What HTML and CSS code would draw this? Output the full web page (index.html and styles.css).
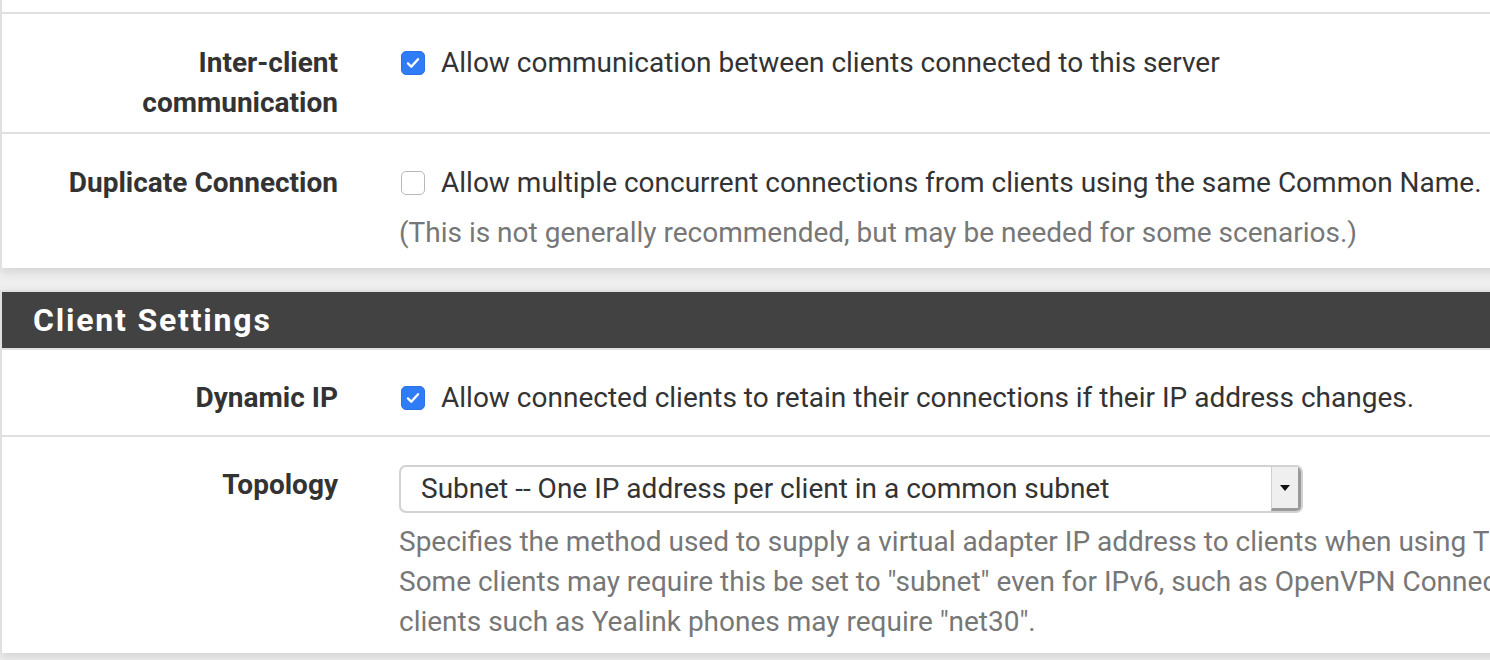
FILE: index.html
```html
<!DOCTYPE html>
<html lang="en">
<head>
  <meta charset="UTF-8" />
  <title>OpenVPN Server Settings</title>
  <link rel="stylesheet" href="styles.css">
</head>
<body>
  <section class="panel panel-first">
    <div class="form-row row-stub"></div>

    <div class="form-row row-intercl">
      <div class="row-label">Inter-client<br>communication</div>
      <div class="row-field">
        <label class="check-line">
          <span class="checkbox checked">
            <svg viewBox="0 0 24 24" width="24" height="24"><path d="M6.5 12.5l3.6 3.6 7.4-8.2" fill="none" stroke="#fff" stroke-width="2.6" stroke-linecap="round" stroke-linejoin="round"/></svg>
          </span>
          Allow communication between clients connected to this server
        </label>
      </div>
    </div>

    <div class="form-row row-dup">
      <div class="row-label">Duplicate Connection</div>
      <div class="row-field">
        <label class="check-line">
          <span class="checkbox"></span>
          Allow multiple concurrent connections from clients using the same Common Name.
        </label>
        <div class="help-text">(This is not generally recommended, but may be needed for some scenarios.)</div>
      </div>
    </div>
  </section>

  <section class="panel">
    <h2 class="panel-heading">Client Settings</h2>

    <div class="form-row row-dynip">
      <div class="row-label">Dynamic IP</div>
      <div class="row-field">
        <label class="check-line">
          <span class="checkbox checked">
            <svg viewBox="0 0 24 24" width="24" height="24"><path d="M6.5 12.5l3.6 3.6 7.4-8.2" fill="none" stroke="#fff" stroke-width="2.6" stroke-linecap="round" stroke-linejoin="round"/></svg>
          </span>
          Allow connected clients to retain their connections if their IP address changes.
        </label>
      </div>
    </div>

    <div class="form-row row-topology">
      <div class="row-label">Topology</div>
      <div class="row-field">
        <div class="select-box">
          <span class="select-value">Subnet -- One IP address per client in a common subnet</span>
          <span class="select-arrow">
            <svg viewBox="0 0 10 6" width="10" height="6"><path d="M0 0h10L5 6z" fill="#111"/></svg>
          </span>
        </div>
        <div class="help-text help-block">
          Specifies the method used to supply a virtual adapter IP address to clients when using TUN mode on IPv4.<br>
          Some clients may require this be set to "subnet" even for IPv6, such as OpenVPN Connect (iOS/Android). Older versions of OpenVPN (before 2.0.9) or<br>
          clients such as Yealink phones may require "net30".
        </div>
      </div>
    </div>
  </section>
</body>
</html>
```

FILE: styles.css
```css
* {
  margin: 0;
  padding: 0;
  box-sizing: border-box;
}

body {
  font-family: 'Roboto', 'Liberation Sans', sans-serif;
  background-color: #efefef;
  color: #333;
  width: 1490px;
  height: 660px;
  overflow: hidden;
}

.panel {
  width: 1700px;
  background-color: #fff;
  border-left: 2px solid #e0e0e0;
  box-shadow: 0 4px 10px rgba(0,0,0,0.12);
}

.panel-first {
  margin-bottom: 22px;
}

.panel-heading {
  background-color: #424242;
  color: #fff;
  font-size: 32px;
  font-weight: 700;
  letter-spacing: 1.8px;
  height: 58px;
  line-height: 56px;
  padding-left: 31px;
  border-top: 2px solid #e0e0e0;
}

.form-row {
  display: grid;
  grid-template-columns: 336px 1fr;
  column-gap: 61px;
  border-bottom: 2px solid #e0e0e0;
  font-size: 28px;
  line-height: 40px;
}

.form-row:last-child {
  border-bottom: none;
}

.panel-heading + .form-row {
  border-top: 2px solid #e0e0e0;
}

.row-stub {
  height: 14px;
}

.row-intercl {
  padding: 29px 0 9px;
}

.row-dup {
  padding: 29px 0 15px;
}

.row-dynip {
  padding: 28px 0 17px;
}

.row-topology {
  padding: 28px 0 11px;
}

.row-label {
  text-align: right;
  font-weight: 700;
  color: #333;
}

.row-field {
  white-space: nowrap;
  color: #333;
}

.check-line {
  display: flex;
  align-items: center;
  gap: 16px;
  padding-left: 2px;
}

.checkbox {
  width: 24px;
  height: 24px;
  flex: none;
  border-radius: 5px;
  border: 1.5px solid #b8b8b8;
  background-color: #fff;
  display: flex;
  align-items: center;
  justify-content: center;
}

.checkbox.checked {
  background-color: #2f7cf6;
  border-color: #2a72e8;
}

.checkbox svg {
  display: block;
}

.help-text {
  color: #777;
  margin-top: 10px;
}

.select-box {
  width: 904px;
  height: 48px;
  border: 2px solid #d2d2d2;
  border-radius: 7px;
  display: flex;
  align-items: stretch;
  overflow: hidden;
  background-color: #fff;
}

.select-value {
  flex: 1;
  padding-left: 20px;
  line-height: 44px;
  color: #333;
}

.select-arrow {
  width: 30px;
  background-color: #efefef;
  border-left: 1px solid #cfcfcf;
  border-right: 3px solid #9a9a9a;
  border-bottom: 3px solid #9a9a9a;
  display: flex;
  align-items: center;
  justify-content: center;
}

.help-block {
  margin-top: 9px;
}
```
